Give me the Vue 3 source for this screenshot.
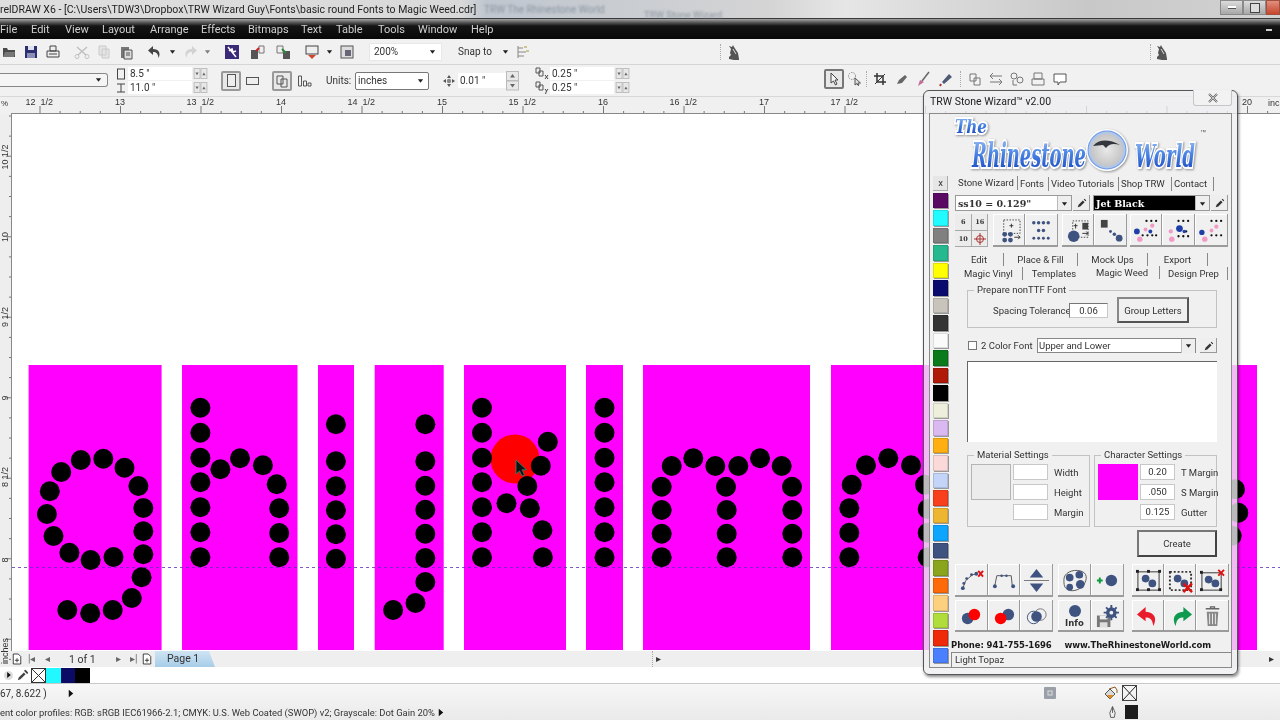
<script setup>
const sx = 1 / 2.45
const m = (pts, ox, kx) => pts.map(([x, y]) => ({ x: +(ox + x * kx).toFixed(1), y: +(360 + y / 3).toFixed(1) }))
const left = [
  [198,300],[253,296],[150,336],[305,323],[122,394],[339,378],[115,462],[351,444],[131,528],[351,514],[170,578],[222,600],[278,591],[351,583],[347,652],[323,714],[276,750],[221,760],[165,750],
  [491,143],[491,218],[491,293],[491,367],[491,442],[491,517],[491,592],[540,328],[588,295],[644,316],[678,373],[684,445],[684,519],[684,592],
  [823,193],[823,304],[823,379],[823,451],[823,523],[823,596],
  [1042,193],[1042,304],[1042,377],[1042,449],[1042,521],[1042,594],[1042,666],[1018,729],[963,750],
  [1181,143],[1181,218],[1181,293],[1181,367],[1181,442],[1181,517],[1181,592],[1241,430],[1342,245],[1325,317],[1292,378],[1298,445],[1329,511],[1330,592],
  [1481,143],[1481,218],[1481,293],[1481,367],[1481,442],[1481,517],[1481,592]
]
const right = [
  [160,295],[95,318],[226,318],[295,318],[360,295],[425,318],[65,380],[258,380],[456,380],[65,450],[260,450],[457,450],[65,521],[260,521],[457,521],[65,592],[260,592],[457,592],
  [745,295],[678,316],[813,316],[635,374],[628,445],[628,518],[628,592],[855,374],[863,447],[863,518],[863,592],
  [1785,388],[1795,458],[1775,527]
]
const dots = [...m(left, 0, sx), ...m(right, 640, 1 / 3)]
const rects = [[28.6,133],[182,115.5],[318,36],[374.7,69],[464,102],[586,37],[643,167],[831,426]]
const swatches = ['#5b0a63','#1ffbff','#808080','#26b98f','#ffff00','#0a0a6e','#c8c4bc','#333333','#fafafa','#0a7a1a','#b01808','#000000','#eeeedd','#d9b9f0','#ffb010','#fbd9d9','#c3d4f8','#f9401c','#eeb530','#0ea5ff','#3f5380','#8aa51c','#ff6a08','#fdd080','#b0dc3c','#ee2a08','#4a80ff']

const hTicks = []
for (let i = 0; i < 66; i++) hTicks.push({ x: 40 + i * 20.125, major: i % 4 === 0 })
const hLabels = []
for (let n = 13; n <= 20; n++) {
  if (n !== 18 && n !== 19) hLabels.push({ x: 120 + 161 * (n - 13), t: String(n) })
}
const hHalf = []
for (let n = 12; n <= 17; n++) hHalf.push({ x: 120 + 161 * (n + 0.5 - 13), t: String(n) })
const vTicks = []
for (let i = 0; i < 28; i++) vTicks.push({ y: 116 + i * 20.125, major: (i + 2) % 4 === 0 })
const vLabels = [
  { y: 237, t: '10' }, { y: 398, t: '9' }, { y: 560, t: '8' },
  { y: 157, t: '10  1/2' }, { y: 317, t: '9  1/2' }, { y: 477, t: '8  1/2' }
]
const menus = [['File','w31'],['Edit','w34'],['View','w37'],['Layout','w48'],['Arrange','w51'],['Effects','w47'],['Bitmaps','w53'],['Text','w35'],['Table','w42'],['Tools','w40'],['Window','w53'],['Help','w30']]
</script>

<template>
  <div class="app">
    <svg class="defs" width="0" height="0" aria-hidden="true">
      <symbol id="drop" viewBox="0 0 8 8"><path d="M1 2.5h6L4 6.5z" fill="#222"/></symbol>
      <symbol id="pick" viewBox="0 0 14 14"><path d="M2 12l1-3 5-5 2 2-5 5zM9 3l1-1 2 2-1 1z" fill="#333"/></symbol>
      <symbol id="knight" viewBox="0 0 16 16"><path d="M3 15V13l2-2-1-2 1-4-2-3 3 1 1-2 1 2 4 6 1 6v2z" fill="#555"/><path d="M7 5l3 5" stroke="#ddd" fill="none"/></symbol>
      <symbol id="tri" viewBox="0 0 8 10"><path d="M1 0l6 5-6 5z" fill="#111"/></symbol>
      <symbol id="spin" viewBox="0 0 15 12"><rect x=".5" y=".5" width="6.5" height="11" fill="#e8e8e8" stroke="#bbb"/><rect x="8" y=".5" width="6.5" height="11" fill="#e8e8e8" stroke="#bbb"/><path d="M2 5h3.5L3.7 8zM9.5 8H13l-1.800-3z" fill="#666"/></symbol>
      <symbol id="pagep" viewBox="0 0 12 14"><path d="M1.500 1h6l3 3v9h-9z" fill="#fff" stroke="#222"/><path d="M6 6v5M3.500 8.500h5" stroke="#222"/></symbol>
    </svg>

    <!-- title -->
    <header class="title">
      <span class="title-text">relDRAW X6 - [C:\Users\TDW3\Dropbox\TRW Wizard Guy\Fonts\basic round Fonts to Magic Weed.cdr]</span>
      <span class="ghost">TRW The Rhinestone World</span>
      <span class="ghost two">TRW Stone Wizard</span>
      <div class="winbtns">
        <span class="wb"><i class="dash"></i></span>
        <span class="wb"><i class="sq"></i></span>
        <span class="wb red"></span>
      </div>
    </header>

    <!-- menu -->
    <nav class="menu">
      <span v-for="mi in menus" :key="mi[0]" :class="mi[1]">{{ mi[0] }}</span>
      <i class="menu-min"></i>
    </nav>

    <!-- standard toolbar -->
    <div class="tb1">
      <svg class="ic" viewBox="0 0 16 16"><path d="M2 4h4l1 2h7v7H2z" fill="#4b4b4b"/><path d="M4 8h10l-1 5H2z" fill="#777"/></svg>
      <svg class="ic g6" viewBox="0 0 16 16"><path d="M2 2h12v12H2z" fill="#2b2f72"/><path d="M5 2h6v4H5z" fill="#dfe2ee"/><path d="M4 9h8v5H4z" fill="#8a8fb8"/></svg>
      <svg class="ic g6" viewBox="0 0 16 16"><path d="M5 2h6v5H5zM2 7h12v6H2z" fill="#eee" stroke="#444"/><path d="M4 10h8" stroke="#444"/></svg>
      <svg class="ic g13 faint" viewBox="0 0 16 16"><path d="M3 3l9 8M13 3L4 11" stroke="#999" stroke-width="1.500"/><circle cx="3" cy="12.500" r="2" fill="none" stroke="#999"/><circle cx="13" cy="12.500" r="2" fill="none" stroke="#999"/></svg>
      <svg class="ic g6 faint" viewBox="0 0 16 16"><path d="M3 2h7v9H3zM6 5h7v9H6z" fill="#ddd" stroke="#aaa"/></svg>
      <svg class="ic g6" viewBox="0 0 16 16"><path d="M3 3h8v11H3z" fill="#777"/><path d="M6 6h8v9H6z" fill="#ddd" stroke="#555"/><path d="M8 9h4M8 11h4" stroke="#555"/></svg>
      <svg class="ic g13" viewBox="0 0 16 16"><path d="M6 2L1 6.500 6 11V8c3 0 5 1 5.500 6C14 9 12 5 6 5z" fill="#444"/></svg>
      <svg class="dd g6"><use href="#drop"/></svg>
      <svg class="ic g6 faint" viewBox="0 0 16 16"><path d="M10 2l5 4.500L10 11V8c-3 0-5 1-5.500 6C2 9 4 5 10 5z" fill="#bbb"/></svg>
      <svg class="dd g6 faint"><use href="#drop"/></svg>
      <svg class="ic g13" viewBox="0 0 16 16"><rect x="1" y="1" width="14" height="14" fill="#3b2a78"/><path d="M4 3l8 10M5 7l3-2 1 3 3-1" stroke="#fff" stroke-width="1.500" fill="none"/></svg>
      <svg class="ic g10" viewBox="0 0 16 16"><rect x="1" y="6" width="7" height="9" fill="#555"/><path d="M9 2h5v7H9z" fill="#eee" stroke="#777"/><path d="M6 7l3-3" stroke="#c22" stroke-width="2"/></svg>
      <svg class="ic g9" viewBox="0 0 16 16"><rect x="8" y="7" width="7" height="8" fill="#555"/><path d="M2 2h6v7H2z" fill="#eee" stroke="#777"/><path d="M7 5l4 4" stroke="#2a8a3a" stroke-width="2"/></svg>
      <svg class="ic g13" viewBox="0 0 16 16"><rect x="2" y="2" width="12" height="8" fill="#eee" stroke="#444"/><path d="M4 11h8l-4 4z" fill="#d2452a"/></svg>
      <svg class="dd g6"><use href="#drop"/></svg>
      <svg class="ic g6" viewBox="0 0 16 16"><rect x="2" y="2" width="12" height="12" fill="#ddd" stroke="#555"/><rect x="6" y="6" width="6" height="6" fill="#667"/></svg>
      <div class="combo zoom"><span>200%</span><svg class="dd"><use href="#drop"/></svg></div>
      <span class="snap">Snap to</span>
      <svg class="dd g10"><use href="#drop"/></svg>
      <svg class="ic g6 snap-ic" viewBox="0 0 16 16"><path d="M3 2v12M3 4h5M3 8h8M3 12h6" stroke="#888"/><path d="M9 3h3M11 7h3" stroke="#a93"/></svg>
      <i class="tsep sep-a"></i>
      <svg class="ic knight-a"><use href="#knight"/></svg>
      <i class="tsep sep-b"></i>
      <svg class="ic knight-b"><use href="#knight"/></svg>
    </div>

    <!-- property bar -->
    <div class="tb2">
      <div class="combo doc"><svg class="dd"><use href="#drop"/></svg></div>
      <div class="pair sz">
        <div class="pr"><svg class="sm" viewBox="0 0 10 12"><rect x="1.500" y="1" width="7" height="10" fill="none" stroke="#444"/></svg><span class="val">8.5 "</span><svg class="spin"><use href="#spin"/></svg></div>
        <div class="pr"><svg class="sm" viewBox="0 0 10 12"><path d="M1 2h8M1 10h8M5 2v8" stroke="#444" fill="none"/></svg><span class="val">11.0 "</span><svg class="spin"><use href="#spin"/></svg></div>
      </div>
      <span class="sel s13"><i class="portrait"></i></span>
      <span class="plain p5"><i class="landscape"></i></span>
      <span class="sel s12"><svg viewBox="0 0 14 14" width="14" height="14"><path d="M2 2h6v8H2zM6 5h6v8H6z" fill="#e9e9e9" stroke="#555"/></svg></span>
      <svg class="plain-ic" viewBox="0 0 15 14"><path d="M1.500 2h3v10h-3zM6.500 7h3v5h-3zM11 9h3v3h-3z" fill="none" stroke="#555"/></svg>
      <span class="units">Units:</span>
      <div class="combo un"><span>inches</span><svg class="dd"><use href="#drop"/></svg></div>
      <svg class="nudge" viewBox="0 0 12 12"><path d="M6 0l2 3H4zM6 12l2-3H4zM0 6l3-2v4zM12 6L9 4v4z" fill="#555"/><circle cx="6" cy="6" r="2.200" fill="#888"/></svg>
      <span class="val nudgev">0.01 "</span>
      <svg class="spinv" viewBox="0 0 13 20"><rect x=".5" y=".5" width="12" height="9" fill="#e8e8e8" stroke="#bbb"/><rect x=".5" y="10" width="12" height="9" fill="#e8e8e8" stroke="#bbb"/><path d="M4 6.500h5L6.500 3zM4 13h5l-2.500 3.500z" fill="#666"/></svg>
      <div class="pair dup">
        <div class="pr"><svg class="sm2" viewBox="0 0 15 13"><path d="M1 1h4v5H1zM4 4h4v5H4z" fill="#eee" stroke="#555"/><path d="M10 8l3 4M13 8l-3 4" stroke="#444"/></svg><span class="val v64">0.25 "</span><svg class="spin"><use href="#spin"/></svg></div>
        <div class="pr"><svg class="sm2" viewBox="0 0 15 13"><path d="M1 1h4v5H1zM4 4h4v5H4z" fill="#eee" stroke="#555"/><path d="M10 8l1.500 2L13 8M11.500 10l-1 3" stroke="#444" fill="none"/></svg><span class="val v64">0.25 "</span><svg class="spin"><use href="#spin"/></svg></div>
      </div>
      <span class="sel s-arrow"><svg viewBox="0 0 12 14" width="12" height="14"><path d="M3 1v10l2.500-2 2 4 1.500-1-2-4h3z" fill="#f5f5f5" stroke="#444"/></svg></span>
      <svg class="tool t11" viewBox="0 0 16 16"><circle cx="5" cy="5" r="3.500" fill="none" stroke="#888" stroke-dasharray="1.500 1"/><path d="M8 7v7l2-1.500 1 2 1-.5-1-2h2.500z" fill="#ddd" stroke="#555"/></svg>
      <i class="vsep sp-a"></i>
      <svg class="tool t9" viewBox="0 0 16 16"><path d="M5 2v9h9M2 5h9v9" fill="none" stroke="#333" stroke-width="1.500"/><path d="M3 13L13 3" stroke="#333"/></svg>
      <svg class="tool t6" viewBox="0 0 16 16"><path d="M3 13l2-4 6-5 2 2-5 6z" fill="#666"/></svg>
      <svg class="tool t6" viewBox="0 0 16 16"><path d="M13 1L6 10" stroke="#666" stroke-width="1.500"/><path d="M2 15l2-6 4 2z" fill="#c66a9a"/></svg>
      <svg class="tool t6" viewBox="0 0 16 16"><path d="M4 11l7-8 3 3-8 7z" fill="#4f5a76"/><path d="M3 13l-1 2" stroke="#a33" stroke-width="2"/></svg>
      <i class="vsep sp-b"></i>
      <svg class="tool t7" viewBox="0 0 16 16"><path d="M3 3h6v7H3zM7 7h6v7H7z" fill="#f4f4f4" stroke="#777"/></svg>
      <svg class="tool t5" viewBox="0 0 16 16"><path d="M2 5h12M2 11h12M5 2l-3 3 3 3M11 8l3 3-3 3" fill="none" stroke="#777"/></svg>
      <svg class="tool t5" viewBox="0 0 16 16"><circle cx="5" cy="5" r="3" fill="none" stroke="#777"/><circle cx="11" cy="9" r="3" fill="none" stroke="#777"/><path d="M4 9v5h4" stroke="#777" fill="none"/></svg>
      <svg class="tool t5" viewBox="0 0 16 16"><path d="M4 2h8v6H4zM2 8h12v6H2z" fill="#f2f2f2" stroke="#777"/></svg>
      <svg class="tool t6" viewBox="0 0 16 16"><path d="M2 3h12v8H8l-2 3v-3H2z" fill="#fff" stroke="#555"/></svg>
    </div>

    <!-- ruler -->
    <div class="hruler">
      <svg width="1280" height="17" class="rul-svg">
        <g font-family="Liberation Sans, sans-serif" font-size="9" fill="#333">
          <text x="1" y="9" font-size="8">%</text>
          <template v-for="t in hTicks" :key="t.x">
            <line :x1="t.x" :x2="t.x" :y1="t.major ? 9 : 14" y2="16" stroke="#777"/>
          </template>
          <text v-for="l in hLabels" :key="l.t" :x="l.x" y="8" text-anchor="middle">{{ l.t }}</text>
          <template v-for="h in hHalf" :key="h.t">
            <text :x="h.x - 4" y="8" text-anchor="end">{{ h.t }}</text>
            <text :x="h.x + 1" y="8">1/2</text>
          </template>
          <text x="1268" y="9">inch</text>
        </g>
        <line x1="11" x2="1280" y1="16.500" y2="16.500" stroke="#888"/>
      </svg>
    </div>

    <!-- drawing area -->
    <main class="stage">
      <div class="vruler">
        <svg width="12" height="537" class="rul-svg">
          <g transform="translate(0,-114)">
            <line v-for="t in vTicks" :key="t.y" :x1="t.major ? 6 : 9" x2="11" :y1="t.y" :y2="t.y" stroke="#777"/>
            <g font-family="Liberation Sans, sans-serif" font-size="9" fill="#333">
              <text v-for="l in vLabels" :key="l.t" text-anchor="middle" xml:space="preserve" :transform="`translate(8,${l.y}) rotate(-90)`">{{ l.t }}</text>
              <text text-anchor="middle" transform="translate(8,651) rotate(-90)">inches</text>
            </g>
          </g>
          <line x1="11.500" x2="11.500" y1="0" y2="537" stroke="#888"/>
        </svg>
      </div>
      <svg class="paper" width="1268" height="537" viewBox="12 114 1268 537">
        <rect v-for="r in rects" :key="r[0]" :x="r[0]" y="365" :width="r[1]" height="285" fill="#ff00ff"/>
        <line x1="12" x2="1280" y1="567.500" y2="567.500" stroke="#5b33b8" stroke-dasharray="3 3" opacity=".8"/>
        <circle cx="515" cy="459" r="24.500" fill="#ff0000"/>
        <circle v-for="(d, i) in dots" :key="i" :cx="d.x" :cy="d.y" r="10" fill="#000"/>
        <path d="M516 460v14l3.500-3 2.500 5 2.500-1.200-2.500-5h4.500z" fill="#111" stroke="#1c8f7a" stroke-width=".8"/>
      </svg>

      <!-- Wizard window floats over the canvas -->
      <section class="wiz">
        <div class="wiz-title">
          <span>TRW Stone Wizard™ v2.00</span>
          <span class="wiz-x"><svg width="12" height="10" viewBox="0 0 12 10"><path d="M2 1l8 8M10 1L2 9" stroke="#666" stroke-width="2"/><path d="M2 1l8 8M10 1L2 9" stroke="#eee" stroke-width=".7"/></svg></span>
        </div>
        <div class="client">
          <svg class="logo" width="290" height="61" viewBox="0 0 290 61">
            <defs>
              <linearGradient id="blue" x1="0" x2="0" y1="0" y2="1"><stop offset="0" stop-color="#a3c4f3"/><stop offset=".45" stop-color="#4a84e4"/><stop offset="1" stop-color="#0f3cb8"/></linearGradient>
              <radialGradient id="orb" cx=".5" cy=".5" r=".5"><stop offset="0" stop-color="#e8e8e8"/><stop offset=".8" stop-color="#c8c8c8"/><stop offset="1" stop-color="#a9c4f0"/></radialGradient>
            </defs>
            <g class="logo-shadow" font-family="DejaVu Serif, Liberation Serif, serif" font-style="italic" font-weight="700" fill="url(#blue)" stroke="#fff" stroke-width="4" paint-order="stroke">
              <text x="23" y="19" font-size="19" textLength="32" lengthAdjust="spacingAndGlyphs">The</text>
              <text x="40" y="53" font-size="33" textLength="114" lengthAdjust="spacingAndGlyphs">Rhinestone</text>
              <circle cx="175" cy="36" r="21" fill="#fff" stroke="none"/>
              <circle cx="175" cy="36" r="18.500" fill="url(#orb)" stroke="#6f9ce8" stroke-width="2"/>
              <path d="M161 32c6-7 16-7 27-1-7-2-11-1-14 3l-3-3z" fill="#33363c" stroke="none"/>
              <text x="203" y="53" font-size="32" textLength="60" lengthAdjust="spacingAndGlyphs">World</text>
            </g>
            <text x="268" y="20" font-size="6" font-family="Liberation Sans, sans-serif" fill="#555">™</text>
          </svg>
          <div class="body">
            <aside class="colors">
              <span class="xbtn">x</span>
              <i v-for="c in swatches" :key="c" class="sw" :style="{ background: c }"></i>
            </aside>
            <div class="main">
              <div class="tabs1">
                <span class="on">Stone Wizard</span><span>Fonts</span><span>Video Tutorials</span><span>Shop TRW</span><span>Contact</span>
              </div>
              <div class="row-combo">
                <div class="wcombo"><b>ss10 = 0.129"</b><span class="ddb"><svg class="dd"><use href="#drop"/></svg></span></div>
                <span class="pickb"><svg width="12" height="12"><use href="#pick"/></svg></span>
                <div class="wcombo dark"><b>Jet Black</b><span class="ddb"><svg class="dd"><use href="#drop"/></svg></span></div>
                <span class="pickb"><svg width="12" height="12"><use href="#pick"/></svg></span>
              </div>
              <div class="btns top">
                <div class="numgrid"><b>6</b><b>16</b><b>10</b><b><svg width="12" height="12" viewBox="0 0 12 12"><circle cx="6" cy="6" r="3.500" fill="none" stroke="#a33"/><path d="M6 0v12M0 6h12" stroke="#a33"/></svg></b></div>
                <span class="ib w32 ml5"><svg viewBox="0 0 28 26"><rect x="8" y="2" width="17" height="14" fill="none" stroke="#444" stroke-dasharray="1.500 1.500"/><path d="M16 6v4M14 8h4" stroke="#333"/><g fill="#3f5380"><circle cx="9" cy="17" r="2.500"/><circle cx="15" cy="17" r="2.500"/><circle cx="9" cy="23" r="2.500"/><circle cx="15" cy="23" r="2.500"/></g><path d="M19 20h6m-2-2l2 2-2 2" stroke="#333" fill="none"/></svg></span>
                <span class="ib"><svg viewBox="0 0 28 26"><g fill="#3f5380"><circle cx="6" cy="5" r="1.800"/><circle cx="11" cy="5" r="1.800"/><circle cx="16" cy="5" r="1.800"/><circle cx="21" cy="5" r="1.800"/><circle cx="11" cy="13" r="1.800"/><circle cx="16" cy="13" r="1.800"/><circle cx="6" cy="21" r="1.500"/><circle cx="11" cy="21" r="1.500"/><circle cx="16" cy="21" r="1.500"/><circle cx="21" cy="21" r="1.500"/></g></svg></span>
                <span class="ib w32 ml4"><svg viewBox="0 0 28 26"><rect x="8" y="3" width="16" height="17" fill="none" stroke="#444" stroke-dasharray="1.500 1.500"/><path d="M11 6v5M9 8h4" stroke="#333"/><path d="M18 5h6v7h-6z" fill="#444"/><circle cx="9" cy="19" r="6" fill="#3f5380"/><path d="M18 16h6m-2-2l2 2-2 2" stroke="#333" fill="none"/></svg></span>
                <span class="ib"><svg viewBox="0 0 28 26"><rect x="4" y="2" width="7" height="8" fill="#444"/><circle cx="14" cy="14" r="1.500" fill="#3f5380"/><circle cx="18" cy="17" r="1.800" fill="#3f5380"/><circle cx="23" cy="21" r="3.500" fill="#3f5380"/></svg></span>
                <span class="ib w32 ml3"><svg viewBox="0 0 28 26"><g fill="#111"><circle cx="14" cy="3" r="1.200"/><circle cx="19" cy="3" r="1.200"/><circle cx="24" cy="3" r="1.200"/><circle cx="10" cy="18" r="1.200"/><circle cx="15" cy="18" r="1.200"/><circle cx="20" cy="18" r="1.200"/><circle cx="24" cy="18" r="1.200"/></g><g fill="#f09ac4"><circle cx="20" cy="8" r="2.200"/><circle cx="13" cy="12" r="2"/><circle cx="7" cy="22" r="2.800"/></g><g fill="#1e3fa8"><circle cx="4" cy="14" r="3"/><circle cx="18" cy="14" r="2"/></g></svg></span>
                <span class="ib"><svg viewBox="0 0 28 26"><g fill="#111"><circle cx="14" cy="3" r="1.200"/><circle cx="19" cy="3" r="1.200"/><circle cx="24" cy="3" r="1.200"/><circle cx="22" cy="14" r="1.200"/><circle cx="14" cy="19" r="1.200"/><circle cx="19" cy="19" r="1.200"/><circle cx="24" cy="19" r="1.200"/></g><g fill="#f09ac4"><circle cx="6" cy="14" r="2.200"/><circle cx="7" cy="22" r="2.800"/></g><circle cx="15" cy="11" r="3.500" fill="#1e3fa8"/><circle cx="20" cy="14" r="1.800" fill="#1e3fa8"/></svg></span>
                <span class="ib"><svg viewBox="0 0 28 26"><g fill="#111"><circle cx="14" cy="3" r="1.200"/><circle cx="19" cy="3" r="1.200"/><circle cx="24" cy="3" r="1.200"/><circle cx="14" cy="18" r="1.200"/><circle cx="19" cy="18" r="1.200"/><circle cx="24" cy="18" r="1.200"/></g><g fill="#f09ac4"><circle cx="19" cy="9" r="2.200"/><circle cx="14" cy="13" r="2"/><circle cx="7" cy="22" r="2.800"/></g><circle cx="4" cy="15" r="2.800" fill="#1e3fa8"/></svg></span>
              </div>
              <div class="tabs2 a"><span>Edit</span><span>Place &amp; Fill</span><span>Mock Ups</span><span>Export</span></div>
              <div class="tabs2 b"><span>Magic Vinyl</span><span class="nosep">Templates</span><span class="on">Magic Weed</span><span>Design Prep</span></div>

              <div class="panel">
                <fieldset class="fs prep">
                  <legend>Prepare nonTTF Font</legend>
                  <div class="prep-row">
                    <span>Spacing Tolerance</span>
                    <span class="fld tol">0.06</span>
                    <span class="btn group">Group Letters</span>
                  </div>
                </fieldset>
                <div class="two">
                  <i class="chk"></i><span class="two-l">2 Color Font</span>
                  <div class="wcombo up"><span>Upper and Lower</span><span class="ddb"><svg class="dd"><use href="#drop"/></svg></span></div>
                  <span class="pickb"><svg width="12" height="12"><use href="#pick"/></svg></span>
                </div>
                <div class="area"></div>
                <div class="settings">
                  <fieldset class="fs set">
                    <legend>Material Settings</legend>
                    <div class="set-grid">
                      <i class="swatch gray"></i>
                      <span class="fld"></span><span>Width</span>
                      <span class="fld"></span><span>Height</span>
                      <i></i><span class="fld"></span><span>Margin</span>
                    </div>
                  </fieldset>
                  <fieldset class="fs set">
                    <legend>Character Settings</legend>
                    <div class="set-grid">
                      <i class="swatch pink"></i>
                      <span class="fld">0.20</span><span>T Margin</span>
                      <span class="fld">.050</span><span>S Margin</span>
                      <i></i><span class="fld">0.125</span><span>Gutter</span>
                    </div>
                  </fieldset>
                </div>
                <div class="create-row"><span class="btn create">Create</span></div>
              </div>

              <div class="btns r1">
                <span class="ib"><svg viewBox="0 0 28 26"><path d="M5 21l3-8 7-6 5-1" fill="none" stroke="#555"/><g fill="#3f5380"><circle cx="5" cy="21" r="2"/><circle cx="6" cy="16" r="1.500"/><circle cx="9" cy="11" r="1.500"/><circle cx="14" cy="7" r="1.500"/><circle cx="19" cy="6" r="2"/></g><path d="M21 3l5 6M26 3l-5 6" stroke="#e01010" stroke-width="2"/></svg></span>
                <span class="ib w32"><svg viewBox="0 0 28 26"><path d="M4 18l2-10h15l1 10" fill="none" stroke="#555"/><g fill="#3f5380"><circle cx="4" cy="19" r="2"/><circle cx="11" cy="8" r="1.300"/><circle cx="16" cy="8" r="1.300"/><circle cx="23" cy="19" r="2"/></g></svg></span>
                <span class="ib split"><svg viewBox="0 0 28 26"><path d="M14 1l7 9H7zM14 25l7-9H7z" fill="#3f5380"/><path d="M1 13h26" stroke="#777"/></svg></span>
                <span class="ib ml5"><svg viewBox="0 0 28 26"><path d="M3 12C3 5 12 1 20 3s7 9 4 14-11 8-16 6-5-6-5-11z" fill="none" stroke="#555"/><g fill="#3f5380"><circle cx="9" cy="10" r="4"/><circle cx="19" cy="7" r="4"/><circle cx="20" cy="17" r="4.500"/><circle cx="9" cy="20" r="3.500"/></g></svg></span>
                <span class="ib"><svg viewBox="0 0 28 26"><path d="M3 13h6M6 10v6" stroke="#0a9a3a" stroke-width="2"/><circle cx="18" cy="13" r="6" fill="#3f5380"/></svg></span>
                <span class="ib w32 ml8"><svg viewBox="0 0 28 26"><rect x="3" y="4" width="22" height="19" fill="none" stroke="#333"/><g fill="#222"><rect x="1" y="2" width="3" height="3"/><rect x="24" y="2" width="3" height="3"/><rect x="1" y="21" width="3" height="3"/><rect x="24" y="21" width="3" height="3"/><rect x="12.500" y="2" width="3" height="3"/><rect x="12.500" y="21" width="3" height="3"/></g><circle cx="11" cy="11" r="4" fill="#3f5380"/><circle cx="18" cy="16" r="4" fill="#3f5380"/></svg></span>
                <span class="ib w32"><svg viewBox="0 0 28 26"><rect x="3" y="4" width="22" height="19" fill="none" stroke="#333" stroke-width="2" stroke-dasharray="2 2"/><circle cx="11" cy="11" r="4" fill="#3f5380"/><circle cx="18" cy="16" r="4" fill="#3f5380"/><path d="M17 16l9 9M26 16l-9 9" stroke="#e01010" stroke-width="2.500"/></svg></span>
                <span class="ib"><svg viewBox="0 0 28 26"><rect x="3" y="5" width="20" height="18" fill="none" stroke="#333"/><g fill="#222"><rect x="1" y="3" width="3" height="3"/><rect x="1" y="21" width="3" height="3"/><rect x="21" y="21" width="3" height="3"/></g><circle cx="10" cy="12" r="4" fill="#3f5380"/><circle cx="17" cy="16" r="4" fill="#3f5380"/><path d="M20 2l6 6M26 2l-6 6" stroke="#e01010" stroke-width="2"/></svg></span>
              </div>
              <div class="btns r2">
                <span class="ib"><svg viewBox="0 0 28 26"><circle cx="10" cy="15" r="6" fill="#3f5380"/><circle cx="17" cy="11" r="6" fill="#f00"/></svg></span>
                <span class="ib w32"><svg viewBox="0 0 28 26"><circle cx="18" cy="11" r="6" fill="#3f5380"/><circle cx="10" cy="15" r="6" fill="#f00"/></svg></span>
                <span class="ib"><svg viewBox="0 0 28 26"><circle cx="11" cy="14" r="6.500" fill="none" stroke="#3f5380"/><circle cx="18" cy="11" r="6" fill="none" stroke="#777"/><circle cx="14" cy="13" r="5.500" fill="#3f5380"/></svg></span>
                <span class="ib ml5 info"><svg viewBox="0 0 28 14" class="infoc"><circle cx="14" cy="7" r="6" fill="#3f5380"/></svg><b>Info</b></span>
                <span class="ib"><svg viewBox="0 0 28 26"><path d="M3 12h14v12H3z" fill="#777"/><path d="M6 12h8v4H6z" fill="#eee"/><path d="M6 19h8v5H6z" fill="#ddd"/><circle cx="18" cy="9" r="5.500" fill="#3f5380"/><path d="M18 1v16M10 9h16M12.500 3.500l11 11M23.500 3.500l-11 11" stroke="#3f5380" stroke-width="2"/><circle cx="18" cy="9" r="2" fill="#eee"/></svg></span>
                <span class="ib w32 ml8"><svg viewBox="0 0 28 26"><path d="M11 3L2 11l9 7v-4c4 0 7 1 8 9 4-8 2-14-8-15z" fill="#e81c2a"/></svg></span>
                <span class="ib w32"><svg viewBox="0 0 28 26"><path d="M17 3l9 8-9 7v-4c-4 0-7 1-8 9-4-8-2-14 8-15z" fill="#0f9a4f"/></svg></span>
                <span class="ib"><svg viewBox="0 0 28 26"><path d="M7 5h14M12 5V3h4v2" stroke="#666" fill="none" stroke-width="1.500"/><path d="M8 8h12l-1 15H9z" fill="#888"/><path d="M11 10v11M14 10v11M17 10v11" stroke="#eee"/></svg></span>
              </div>
              <div class="phone"><b>Phone: 941-755-1696</b><b>www.TheRhinestoneWorld.com</b></div>
              <div class="wstat">Light Topaz</div>
            </div>
          </div>
        </div>
      </section>
    </main>

    <!-- page nav -->
    <div class="pagenav">
      <svg class="pg"><use href="#pagep"/></svg>
      <span class="nav n1">|◂</span><span class="nav n2">◂</span>
      <span class="of">1 of 1</span>
      <span class="nav n3">▸</span><span class="nav n4">▸|</span>
      <svg class="pg pg2"><use href="#pagep"/></svg>
      <span class="pagetab">Page 1</span>
      <i class="scrollbtn"></i><span class="nav n5">▸</span>
      <span class="nav n6">▸</span>
    </div>

    <!-- palette -->
    <div class="palette">
      <span class="circ"><svg width="6" height="6"><use href="#tri"/></svg></span>
      <svg class="eyed" viewBox="0 0 14 14"><path d="M1 13l1-3 6-6 2 2-6 6zM8 2l2-1 3 3-1 2z" fill="#444"/></svg>
      <span class="xbox"><svg width="13" height="13" viewBox="0 0 13 13"><path d="M0 0l13 13M13 0L0 13" stroke="#333"/></svg></span>
      <i class="pc cy"></i><i class="pc na"></i><i class="pc bk"></i>
    </div>

    <!-- status -->
    <footer class="status">
      <div class="st1">
        <span class="coord">67, 8.622 )</span>
        <svg class="st-tri"><use href="#tri"/></svg>
        <svg class="gray-ic" viewBox="0 0 12 12"><rect width="12" height="12" rx="1" fill="#9a9fa8"/><rect x="4" y="4" width="4" height="4" fill="none" stroke="#ddd"/></svg>
        <svg class="bucket" viewBox="0 0 14 14"><path d="M1 8l5-5 5 5-5 5z" fill="#d9d9d9" stroke="#555"/><path d="M3 9h7l-4 4z" fill="#e08a25"/><path d="M5 3l6-2 2 3v3" fill="none" stroke="#8a5a20"/></svg>
        <span class="xs"><svg width="13" height="14" viewBox="0 0 13 14"><path d="M0 0l13 14M13 0L0 14" stroke="#222"/></svg></span>
      </div>
      <div class="st2">
        <span class="profiles">ent color profiles: RGB: sRGB IEC61966-2.1; CMYK: U.S. Web Coated (SWOP) v2; Grayscale: Dot Gain 20%</span>
        <svg class="st-tri t2"><use href="#tri"/></svg>
        <svg class="pen" viewBox="0 0 10 14"><path d="M5 1L8 8 7 13H3L2 8z" fill="#eee" stroke="#555"/><path d="M5 1v7" stroke="#555"/></svg>
        <i class="blk"></i>
      </div>
    </footer>
  </div>
</template>

<style scoped>
.app { position: relative; width: 1280px; height: 720px; overflow: hidden; display: flex; flex-direction: column; background: #f0f0f0; font-family: Roboto, "Liberation Sans", sans-serif; font-size: 10px; color: #333; filter: blur(.35px); }
.defs { position: absolute; }
svg { display: block; flex: none; }
i { display: block; font-style: normal; }

.title { height: 19px; flex: none; box-sizing: border-box; display: flex; align-items: center; background: linear-gradient(90deg, #dedede 0, #d9d9d9 36%, #bfc6cf 38%, #d4d4d4 60%, #e6e6e6 66%, #c8c8c8 85%, #d2d2d2 100%); border-bottom: 1px solid #3a3a3a; }
.title-text { font-size: 10.5px; color: #222; white-space: nowrap; width: 460px; flex: none; }
.ghost { margin-left: 24px; font-size: 10px; color: #8a94a0; filter: blur(1.2px); white-space: nowrap; width: 160px; }
.ghost.two { margin-left: 0; }
.winbtns { margin-left: auto; display: flex; height: 15px; align-self: flex-start; }
.wb { width: 23px; height: 15px; box-sizing: border-box; background: linear-gradient(#dcdcdc, #a8a8a8); border: 1px solid #8a8a8a; display: flex; align-items: center; justify-content: center; }
.wb.red { width: 14px; background: linear-gradient(#e09080, #c8452c); border-color: #a0503c; }
.dash { width: 8px; height: 2px; background: #fff; border-bottom: 1px solid #555; }
.sq { width: 8px; height: 8px; border: 1px solid #444; background: #ddd; }

.menu { height: 20px; flex: none; display: flex; align-items: flex-end; padding-bottom: 2px; box-sizing: border-box; background: linear-gradient(#a4a4a4 0, #555 18%, #141414 35%, #080808 100%); color: #d0d0d0; font-size: 11px; position: relative; }
.menu span { flex: none; line-height: 15px; }
.w31 { width: 31px; } .w34 { width: 34px; } .w37 { width: 37px; } .w48 { width: 48px; } .w51 { width: 51px; } .w47 { width: 47px; } .w53 { width: 53px; } .w35 { width: 35px; } .w42 { width: 42px; } .w40 { width: 40px; } .w30 { width: 30px; }
.menu-min { position: absolute; right: 8px; top: 10px; width: 6px; height: 2px; background: #ccc; }

.tb1 { height: 26px; flex: none; display: flex; align-items: center; padding-left: 1px; background: #f1f1f1; border-bottom: 1px solid #d5d5d5; box-sizing: border-box; }
.ic { width: 16px; height: 16px; flex: none; }
.dd { width: 7px; height: 7px; flex: none; }
.faint { opacity: .55; }
.g6 { margin-left: 6px; } .g9 { margin-left: 9px; } .g10 { margin-left: 10px; } .g13 { margin-left: 13px; }
.combo { display: flex; align-items: center; justify-content: space-between; box-sizing: border-box; background: #fff; border: 1px solid #b8b8b8; padding: 0 5px; flex: none; }
.zoom { margin-left: 14px; width: 73px; height: 18px; font-size: 10px; padding-left: 4px; border-color: #e8e8e8; }
.snap { margin-left: 16px; font-size: 10px; width: 34px; white-space: nowrap; }
.tsep { width: 0; height: 16px; border-left: 1px dotted #aaa; flex: none; }
.sep-a { margin-left: 189px; }
.sep-b { margin-left: 408px; }
.knight-a { margin-left: 5px; }
.knight-b { margin-left: 3px; }

.tb2 { height: 32px; flex: none; display: flex; align-items: center; background: #f1f1f1; border-bottom: 1px solid #d8d8d8; box-sizing: border-box; }
.doc { width: 108px; height: 14px; border-left: 0; justify-content: flex-end; margin-top: -2px; background: #f5f5f5; border-color: #888; border-radius: 0 3px 3px 0; }
.pair { flex: none; display: flex; flex-direction: column; gap: 1px; }
.sz { margin-left: 8px; width: 92px; }
.pr { display: flex; align-items: center; height: 13px; font-size: 10px; }
.sm { width: 10px; height: 12px; flex: none; }
.sm2 { width: 15px; height: 13px; flex: none; }
.val { display: block; background: #fff; height: 13px; line-height: 13px; padding-left: 2px; font-size: 10px; box-sizing: border-box; }
.sz .val { width: 64px; margin-left: 2px; }
.spin { width: 15px; height: 11px; margin-left: 1px; flex: none; }
.sel { display: flex; align-items: center; justify-content: center; width: 20px; height: 20px; box-sizing: border-box; border: 2px solid #999; border-radius: 2px; background: #e8e8e8; flex: none; }
.s13 { margin-left: 13px; } .s12 { margin-left: 12px; }
.portrait { width: 9px; height: 13px; border: 1px solid #555; background: #eee; box-sizing: border-box; }
.plain { display: flex; align-items: center; flex: none; width: 14px; }
.p5 { margin-left: 5px; }
.landscape { width: 13px; height: 8px; border: 1px solid #555; background: #eee; box-sizing: border-box; }
.plain-ic { width: 15px; height: 14px; margin-left: 5px; }
.units { margin-left: 14px; width: 27px; font-size: 10px; }
.un { margin-left: 2px; width: 74px; height: 18px; padding: 0 4px 0 2px; border: 1px solid #777; border-radius: 2px; font-size: 10px; }
.nudge { width: 12px; height: 12px; margin-left: 14px; }
.nudgev { margin-left: 3px; width: 48px; height: 15px; line-height: 15px; }
.spinv { width: 13px; height: 20px; }
.dup { margin-left: 16px; width: 95px; }
.v64 { width: 64px; }
.s-arrow { margin-left: 194px; margin-top: -3px; border-color: #777; }
.tool { width: 16px; height: 16px; flex: none; margin-top: -3px; }
.t11 { margin-left: 3px; } .t9 { margin-left: 5px; } .t6 { margin-left: 6px; } .t7 { margin-left: 6px; } .t5 { margin-left: 5px; }
.vsep { width: 0; height: 16px; border-left: 1px dotted #aaa; margin-top: -3px; flex: none; }
.sp-a { margin-left: 3px; } .sp-b { margin-left: 6px; }

.hruler { height: 17px; flex: none; background: #f0f0f0; }
.rul-svg { overflow: visible; }

.stage { position: relative; z-index: 2; height: 537px; flex: none; display: flex; background: #fff; }
.vruler { width: 12px; flex: none; background: #eeeeee; }
.paper { flex: none; }

.wiz { position: absolute; left: 923px; top: -24px; width: 315px; height: 585px; box-sizing: border-box; border: 1px solid #555; border-radius: 6px; padding: 0 5px; background: rgba(238, 238, 242, .78); box-shadow: 1px 2px 3px rgba(0, 0, 0, .45); color: #333; }
.wiz-title { height: 22px; padding-bottom: 2px; box-sizing: border-box; display: flex; align-items: center; font-size: 10.5px; color: #222; padding-left: 1px; position: relative; }
.wiz-x { position: absolute; right: 0; top: -1px; width: 39px; height: 16px; display: flex; align-items: center; justify-content: center; border: 1px solid #c5c5c5; border-top: 0; background: #f2f2f2; border-radius: 0 0 3px 3px; box-sizing: border-box; }
.client { height: 555px; width: 303px; box-sizing: border-box; border: 1px solid #8a8a8a; background: #f0f0f0; display: flex; flex-direction: column; }
.logo { margin-left: 2px; flex: none; }
.logo-shadow { filter: drop-shadow(1px 1px 1px rgba(90, 90, 90, .6)); }
.body { display: flex; flex: 1; }
.colors { width: 18px; padding-left: 3px; box-sizing: border-box; flex: none; display: flex; flex-direction: column; }
.xbtn { height: 15px; margin-top: 1px; margin-bottom: 1.500px; background: #e6e6e6; box-shadow: inset -1px -1px 0 #aaa; text-align: center; line-height: 14px; font-size: 9.500px; }
.sw { height: 15.500px; margin-bottom: 2px; box-shadow: inset 0 0 0 1px rgba(0, 0, 0, .12), 1px 1px 0 #999; flex: none; }
.main { margin-left: 3px; width: 280px; flex: none; display: flex; flex-direction: column; }
.tabs1 { height: 18px; display: grid; grid-template-columns: 62px 31px 70px 53px 42px; padding-left: 5px; align-items: center; font-size: 9.500px; white-space: nowrap; }
.tabs1 span { padding-left: 2px; border-right: 1px solid #888; height: 14px; line-height: 14px; }
.tabs1 .on { margin-top: -2px; }
.row-combo { margin-top: 2px; height: 16px; display: flex; padding-left: 4px; }
.wcombo { display: flex; align-items: center; justify-content: space-between; height: 16px; width: 117px; box-sizing: border-box; background: #fff; border: 1px solid #999; padding-left: 2px; flex: none; }
.wcombo b { font-family: "DejaVu Serif", "Liberation Serif", serif; font-size: 9.500px; }
.wcombo.dark { background: #000; color: #fff; margin-left: 3px; }
.ddb { width: 13px; height: 14px; background: #eee; display: flex; align-items: center; justify-content: center; flex: none; border-left: 1px solid #bbb; }
.pickb { width: 17px; height: 16px; margin-left: 1px; flex: none; display: flex; align-items: center; justify-content: center; background: #eee; box-shadow: inset -1px -1px 0 #999; }
.btns { display: flex; padding-left: 4px; flex: none; }
.top { margin-top: 3px; height: 33px; }
.r1 { margin-top: 7px; height: 33px; }
.r2 { margin-top: 3px; height: 32px; }
.ib { width: 33px; height: 100%; box-sizing: border-box; flex: none; display: flex; align-items: center; justify-content: center; background: #f0f0f0; box-shadow: inset -1px -2px 0 #9b9b9b, inset 1px 1px 0 #fff; }
.ib svg { width: 27px; height: 25px; }
.w32 { width: 32px; }
.ml3 { margin-left: 3px; } .ml4 { margin-left: 4px; } .ml5 { margin-left: 5px; } .ml8 { margin-left: 8px; }
.info { flex-direction: column; gap: 0; }
.ib .infoc { height: 14px; width: 28px; }
.info b { font-family: "DejaVu Sans", sans-serif; font-size: 8.500px; line-height: 11px; }
.numgrid { width: 33px; height: 33px; flex: none; display: grid; grid-template-columns: 1fr 1fr; grid-template-rows: 1fr 1fr; font-family: "DejaVu Serif", serif; font-size: 6.500px; background: #ececec; }
.numgrid b { display: flex; align-items: center; justify-content: center; box-shadow: inset -1px -1px 0 #a8a8a8; }
.tabs2 { display: grid; height: 14px; align-items: center; padding-left: 4px; font-size: 9.500px; text-align: center; white-space: nowrap; flex: none; }
.tabs2 span { border-right: 1px solid #888; height: 13px; line-height: 13px; }
.tabs2.a { margin-top: 5px; grid-template-columns: 49px 74px 70px 60px; }
.tabs2.b { grid-template-columns: 68px 62px 75px 68px; }
.tabs2 .nosep { border-right: 0; }
.tabs2 .on { margin-top: -2px; }

.panel { padding-left: 16px; width: 266px; box-sizing: border-box; display: flex; flex-direction: column; flex: none; }
.fs { margin: 0; padding: 0; border: 1px solid #c2c2c2; min-inline-size: 0; box-sizing: border-box; font-size: 9.500px; }
.fs legend { margin-left: 6px; padding: 0 3px; font-size: 9.500px; line-height: 14px; white-space: nowrap; }
.prep { margin-top: 3px; height: 45px; width: 250px; }
.prep-row { display: flex; align-items: center; padding-left: 25px; height: 26px; white-space: nowrap; }
.prep-row > span:first-child { width: 76px; }
.fld { display: block; box-sizing: border-box; background: #fff; border: 1px solid #c8c8c8; text-align: center; line-height: 14px; font-size: 9.500px; }
.tol { width: 39px; height: 15px; line-height: 13px; border-top-color: #777; border-left-color: #777; }
.btn { display: flex; align-items: center; justify-content: center; box-sizing: border-box; background: #f0f0f0; border: 2px solid #555; border-top-color: #888; border-left-color: #888; font-size: 9.500px; }
.group { width: 72px; height: 26px; margin-left: 9px; }
.two { margin-top: 10px; height: 15px; display: flex; align-items: center; font-size: 9.500px; white-space: nowrap; }
.chk { width: 9px; height: 9px; margin-left: 1px; background: #fff; border: 1px solid #777; box-sizing: border-box; }
.two-l { margin-left: 4px; width: 56px; }
.up { width: 159px; height: 15px; padding-left: 1px; border-color: #888; }
.two .pickb { margin-left: 4px; height: 15px; }
.area { margin-top: 8px; height: 81px; width: 250px; background: #fff; box-sizing: border-box; border-top: 1px solid #666; border-left: 1px solid #666; }
.settings { margin-top: 6px; display: flex; gap: 4px; height: 79px; }
.set { width: 123px; height: 79px; }
.set-grid { display: grid; grid-template-columns: 40px 35px auto; grid-template-rows: 16px 16px 16px; column-gap: 2px; row-gap: 4px; padding: 2px 0 0 3px; align-items: center; white-space: nowrap; font-size: 9.500px; }
.set-grid > span:not(.fld) { margin-left: 4px; }
.set-grid .fld { height: 16px; }
.swatch { grid-row: span 2; height: 36px; }
.gray { background: #ececec; border: 1px solid #b5b5b5; box-sizing: border-box; }
.pink { background: #ff00ff; }
.create-row { margin-top: 3px; height: 27px; display: flex; justify-content: flex-end; width: 250px; }
.create { width: 80px; height: 27px; border-color: #444; border-top-color: #777; border-left-color: #777; }
.phone { margin-top: 5px; height: 16px; width: 280px; box-sizing: border-box; display: flex; gap: 13px; align-items: center; border-bottom: 1px solid #888; font-family: "DejaVu Sans", "Liberation Sans", sans-serif; font-size: 8.500px; color: #1a1a1a; letter-spacing: -.1px; white-space: nowrap; }
.wstat { height: 15px; line-height: 14px; padding-left: 3px; font-size: 9.500px; border-left: 1px solid #888; }

.pagenav { height: 16px; flex: none; display: flex; align-items: center; background: #efefef; position: relative; font-size: 10.500px; }
.pg { width: 10px; height: 12px; margin-left: 12px; flex: none; }
.pg2 { position: absolute; left: 142px; margin: 0; }
.nav { position: absolute; color: #666; font-size: 10px; top: 2px; }
.n1 { left: 28px; } .n2 { left: 45px; } .n3 { left: 116px; } .n4 { left: 130px; } .n5 { left: 656px; color: #333; } .n6 { left: 1269px; color: #333; }
.of { position: absolute; left: 69px; }
.pagetab { position: absolute; left: 155px; top: 0; width: 60px; height: 16px; box-sizing: border-box; padding-left: 12px; line-height: 15px; background: linear-gradient(#cfe4f3, #a7cde8); clip-path: polygon(0 0, 90% 0, 100% 100%, 0 100%); }
.scrollbtn { position: absolute; left: 640px; top: 0; width: 12px; height: 16px; border-right: 1px dotted #aaa; }

.palette { height: 17px; flex: none; display: flex; align-items: center; background: #fff; border-bottom: 1px solid #c8c8c8; box-sizing: border-box; }
.circ { width: 9px; height: 9px; margin-left: 4px; border-radius: 50%; background: #ddd; display: flex; align-items: center; justify-content: center; flex: none; }
.eyed { width: 12px; height: 12px; margin-left: 4px; }
.xbox { margin-left: 3px; width: 13px; height: 13px; flex: none; box-shadow: 0 0 0 1px #333; }
.pc { width: 14.500px; height: 15px; flex: none; }
.cy { margin-left: 1px; background: #22f8ff; } .na { background: #0b0b66; } .bk { background: #000; }

.status { flex: 1; background: linear-gradient(#f7f7f7, #e9e9e9); position: relative; display: flex; flex-direction: column; }
.st1 { height: 18px; display: flex; align-items: center; font-size: 10px; white-space: nowrap; }
.st2 { height: 20px; display: flex; align-items: center; font-size: 9.400px; white-space: nowrap; }
.coord { width: 68px; flex: none; }
.st-tri { width: 6px; height: 9px; flex: none; }
.gray-ic { width: 12px; height: 12px; margin-left: 970px; }
.bucket { width: 14px; height: 14px; margin-left: 48px; }
.xs { margin-left: 5px; width: 13px; height: 14px; flex: none; outline: 1px solid #444; }
.profiles { width: 438px; flex: none; overflow: hidden; }
.pen { width: 9px; height: 14px; margin-left: 664px; flex: none; }
.blk { width: 13px; height: 14px; margin-left: 8px; background: #1c1c1c; }
</style>
